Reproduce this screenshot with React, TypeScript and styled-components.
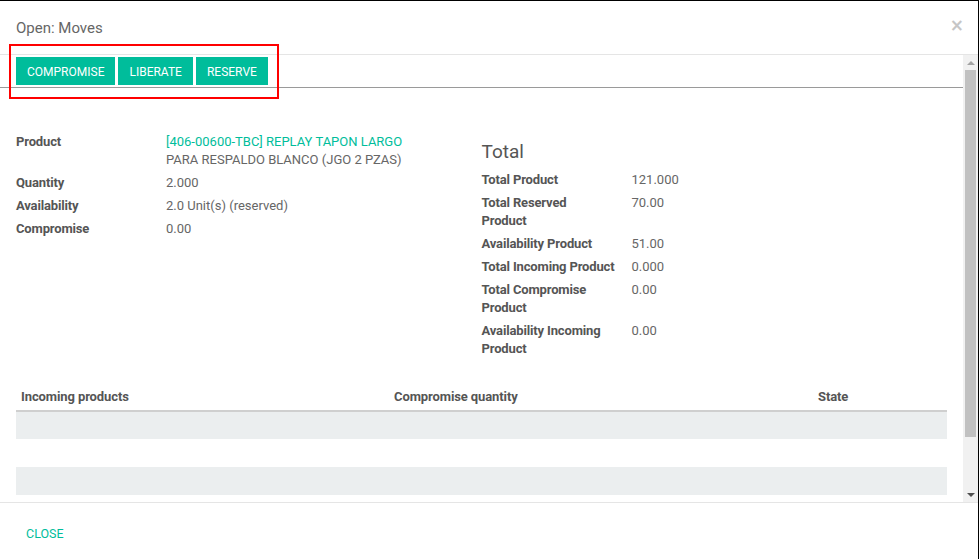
import React from "react";
import styled, { createGlobalStyle } from "styled-components";

const GlobalStyle = createGlobalStyle`
  html, body {
    margin: 0;
    padding: 0;
    background: #fff;
  }
  body {
    font-family: Roboto, "Noto Sans", "Liberation Sans", sans-serif;
    font-size: 13px;
    color: #666;
  }
`;

const TEAL = "#00bd9b";

const Modal = styled.div`
  position: relative;
  box-sizing: border-box;
  width: 979px;
  height: 559px;
  border-top: 1px solid #000;
  border-right: 1px solid #000;
  display: flex;
  flex-direction: column;
  background: #fff;
`;

const Header = styled.div`
  height: 53px;
  flex: none;
  border-bottom: 1px solid #e5e5e5;
  display: flex;
  align-items: center;
  justify-content: space-between;
  padding: 0 16px;
`;

const Title = styled.h4`
  margin: 0;
  padding-top: 1px;
  font-size: 15px;
  font-weight: 400;
  color: #666;
`;

const CloseX = styled.button`
  border: 0;
  background: none;
  padding: 0;
  margin-top: -4px;
  margin-right: -2px;
  font-family: "DejaVu Sans", sans-serif;
  font-size: 17px;
  font-weight: 700;
  color: #c6c6c6;
  line-height: 1;
  cursor: pointer;
`;

const Body = styled.div`
  flex: 1;
  min-height: 0;
  display: flex;
`;

const Viewport = styled.div`
  flex: 1;
  min-width: 0;
  overflow: hidden;
`;

const ScrollBar = styled.div`
  width: 15px;
  flex: none;
  display: flex;
  flex-direction: column;
  background: #f1f1f1;
`;

const ScrollArrow = styled.div`
  height: 15px;
  flex: none;
  display: flex;
  align-items: center;
  justify-content: center;
`;

const ScrollTrack = styled.div`
  flex: 1;
  padding: 0 2px;
`;

const ScrollThumb = styled.div`
  height: 367px;
  background: #c1c1c1;
`;

const ButtonBar = styled.div`
  display: flex;
  gap: 3px;
  padding: 2px 16px 2px;
  border-bottom: 1px solid #9a9a9a;
`;

const ActionButton = styled.button`
  height: 28px;
  padding: 1px 11px 0;
  border: 0;
  border-radius: 0;
  background: ${TEAL};
  color: #fff;
  font-family: Roboto, "Liberation Sans", sans-serif;
  font-size: 12px;
  text-transform: uppercase;
  cursor: pointer;
`;

const Sheet = styled.div`
  padding: 45px 16px 0;
`;

const Groups = styled.div`
  display: grid;
  grid-template-columns: 1fr 1fr;
`;

const FieldTable = styled.table`
  border-collapse: collapse;
  align-self: start;
`;

const LabelCell = styled.td`
  width: 140px;
  padding: 0 10px 5px 0;
  vertical-align: top;
  line-height: 18px;
  font-weight: 700;
  letter-spacing: -0.15px;
  color: #555;
  white-space: pre-line;
`;

const ValueCell = styled.td`
  padding: 0 0 5px 0;
  vertical-align: top;
  line-height: 18px;
  color: #666;
`;

const Link = styled.a`
  color: ${TEAL};
  text-decoration: none;
  cursor: pointer;
`;

const GroupTitle = styled.h2`
  margin: 8px 0 8px;
  font-size: 19px;
  line-height: 22px;
  font-weight: 400;
  color: #555;
`;

const Lines = styled.table`
  width: 100%;
  margin-top: 18px;
  border-collapse: collapse;
  table-layout: fixed;
`;

const HeadCell = styled.th<{ $w?: number }>`
  width: ${(p) => (p.$w ? `${p.$w}px` : "auto")};
  padding: 7px 5px 4px;
  line-height: 18px;
  text-align: left;
  font-weight: 700;
  letter-spacing: -0.1px;
  color: #555;
  border-bottom: 2px solid #cfcfcf;
`;

const LineRow = styled.tr<{ $odd: boolean }>`
  height: 28px;
  background: ${(p) => (p.$odd ? "#ebeeef" : "#fff")};
`;

const Footer = styled.div`
  height: 56px;
  flex: none;
  border-top: 1px solid #e5e5e5;
  display: flex;
  align-items: center;
  padding: 0 16px;
`;

const FlatButton = styled.button`
  border: 0;
  background: none;
  padding: 6px 10px;
  margin-top: 4px;
  color: ${TEAL};
  font-family: Roboto, "Liberation Sans", sans-serif;
  font-size: 12.5px;
  text-transform: uppercase;
  cursor: pointer;
`;

const Highlight = styled.div`
  position: absolute;
  left: 9px;
  top: 43px;
  width: 270px;
  height: 55px;
  box-sizing: border-box;
  border: 2px solid #f00;
  pointer-events: none;
`;

const Triangle = ({ up, color }: { up?: boolean; color: string }) => (
  <svg width="8" height="4" viewBox="0 0 8 4">
    <path d={up ? "M0 4 L4 0 L8 4 Z" : "M0 0 L8 0 L4 4 Z"} fill={color} />
  </svg>
);

const totals: [string, string][] = [
  ["Total Product", "121.000"],
  ["Total Reserved\nProduct", "70.00"],
  ["Availability Product", "51.00"],
  ["Total Incoming Product", "0.000"],
  ["Total Compromise\nProduct", "0.00"],
  ["Availability Incoming\nProduct", "0.00"],
];

export default function App() {
  return (
    <>
      <GlobalStyle />
      <Modal>
        <Header>
          <Title>Open: Moves</Title>
          <CloseX aria-label="close">×</CloseX>
        </Header>
        <Body>
          <Viewport>
            <ButtonBar>
              <ActionButton>Compromise</ActionButton>
              <ActionButton>Liberate</ActionButton>
              <ActionButton>Reserve</ActionButton>
            </ButtonBar>
            <Sheet>
              <Groups>
                <FieldTable>
                  <tbody>
                    <tr>
                      <LabelCell>Product</LabelCell>
                      <ValueCell>
                        <Link>[406-00600-TBC] REPLAY TAPON LARGO</Link>
                        <br />
                        PARA RESPALDO BLANCO (JGO 2 PZAS)
                      </ValueCell>
                    </tr>
                    <tr>
                      <LabelCell>Quantity</LabelCell>
                      <ValueCell>2.000</ValueCell>
                    </tr>
                    <tr>
                      <LabelCell>Availability</LabelCell>
                      <ValueCell>2.0 Unit(s) (reserved)</ValueCell>
                    </tr>
                    <tr>
                      <LabelCell>Compromise</LabelCell>
                      <ValueCell>0.00</ValueCell>
                    </tr>
                  </tbody>
                </FieldTable>
                <div>
                  <GroupTitle>Total</GroupTitle>
                  <FieldTable>
                    <tbody>
                      {totals.map(([label, value]) => (
                        <tr key={label}>
                          <LabelCell>{label}</LabelCell>
                          <ValueCell>{value}</ValueCell>
                        </tr>
                      ))}
                    </tbody>
                  </FieldTable>
                </div>
              </Groups>
              <Lines>
                <thead>
                  <tr>
                    <HeadCell $w={363}>Incoming products</HeadCell>
                    <HeadCell $w={414}>Compromise quantity</HeadCell>
                    <HeadCell>State</HeadCell>
                  </tr>
                </thead>
                <tbody>
                  {[0, 1, 2].map((i) => (
                    <LineRow key={i} $odd={i % 2 === 0}>
                      <td />
                      <td />
                      <td />
                    </LineRow>
                  ))}
                </tbody>
              </Lines>
            </Sheet>
          </Viewport>
          <ScrollBar>
            <ScrollArrow>
              <Triangle up color="#a3a3a3" />
            </ScrollArrow>
            <ScrollTrack>
              <ScrollThumb />
            </ScrollTrack>
            <ScrollArrow>
              <Triangle color="#505050" />
            </ScrollArrow>
          </ScrollBar>
        </Body>
        <Footer>
          <FlatButton>Close</FlatButton>
        </Footer>
        <Highlight />
      </Modal>
    </>
  );
}
